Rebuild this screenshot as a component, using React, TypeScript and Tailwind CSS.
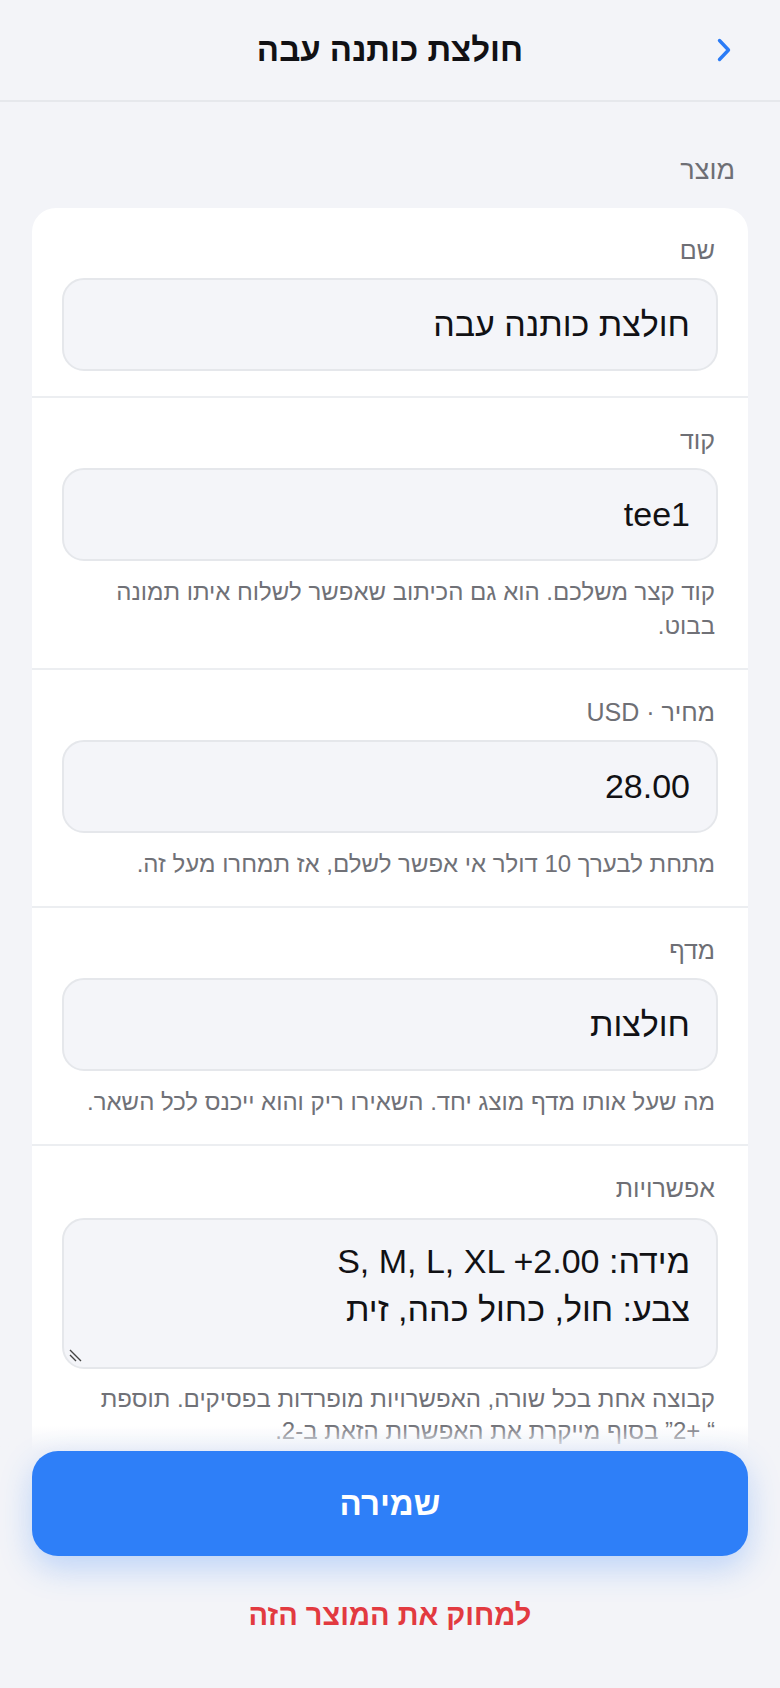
import React from 'react';

type Field = {
    label: string;
    value: string;
    help?: React.ReactNode;
};

const fields: Field[] = [
    { label: 'שם', value: 'חולצת כותנה עבה' },
    {
        label: 'קוד',
        value: 'tee1',
        help: (
            <>
                קוד קצר משלכם. הוא גם הכיתוב שאפשר לשלוח איתו תמונה
                <br />
                בבוט.
            </>
        ),
    },
    { label: 'מחיר · USD', value: '28.00', help: 'מתחת לבערך 10 דולר אי אפשר לשלם, אז תמחרו מעל זה.' },
    { label: 'מדף', value: 'חולצות', help: 'מה שעל אותו מדף מוצג יחד. השאירו ריק והוא ייכנס לכל השאר.' },
];

const FONT = '"Liberation Sans", Arial, "DejaVu Sans", sans-serif';

const Chevron = () => (
    <svg width="16" height="24" viewBox="0 0 16 24" fill="none">
        <path d="M3.5 2.5 L12.5 12 L3.5 21.5" stroke="#2b7cf6" strokeWidth="3.4" strokeLinecap="round" strokeLinejoin="round" />
    </svg>
);

const FieldRow: React.FC<{ field: Field }> = ({ field }) => (
    <div className="px-[30px] pt-[28px] pb-[25px] border-b-2 border-[#eceef1]">
        <div className="pr-[3px] text-[25px] leading-[28px] text-[#6e6f75]">{field.label}</div>
        <div className="mt-[14px] h-[93px] rounded-[22px] border-2 border-[#e5e7eb] bg-[#f4f5f9] px-[26px] flex items-center">
            <span className="text-[34px] text-[#111114]">{field.value}</span>
        </div>
        {field.help && (
            <p className="mt-[14px] pr-[3px] whitespace-nowrap text-[24px] leading-[34px] text-[#707177]">{field.help}</p>
        )}
    </div>
);

export default function App() {
    return (
        <div dir="rtl" className="relative h-[1688px] overflow-hidden bg-[#f3f4f8]" style={{ fontFamily: FONT }}>
            {/* Header */}
            <header className="h-[102px] grid grid-cols-[90px_1fr_90px] items-center border-b-2 border-[#e6e8ec]">
                <div className="flex mr-[48px]">
                    <Chevron />
                </div>
                <h1 className="text-center text-[33px] font-bold text-[#111114]">חולצת כותנה עבה</h1>
                <div />
            </header>

            <div className="pt-[56px] pr-[45px] text-[27px] leading-[24px] text-[#6e6f75]">מוצר</div>

            {/* Card */}
            <div className="mx-8 mt-[26px] rounded-[24px] bg-white">
                {fields.map(f => (
                    <FieldRow key={f.label} field={f} />
                ))}

                {/* Options */}
                <div className="px-[30px] pt-[28px] pb-24">
                    <div className="pr-[3px] text-[25px] leading-[28px] text-[#6e6f75]">אפשרויות</div>
                    <div className="relative mt-[16px] h-[151px] rounded-[22px] border-2 border-[#e5e7eb] bg-[#f4f5f9] px-[26px] pt-[17px]">
                        <div className="text-[34px] leading-[48px] text-[#111114]">
                            <div>מידה: S, M, L, XL +2.00</div>
                            <div>צבע: חול, כחול כהה, זית</div>
                        </div>
                        <svg className="absolute left-[4px] bottom-[4px]" width="18" height="18" viewBox="0 0 18 18">
                            <path d="M2 5 L13 16 M2 10 L8 16" stroke="#444" strokeWidth="1.4" />
                        </svg>
                    </div>
                    <p className="mt-[14px] pr-[3px] text-[24px] leading-[32px] text-[#707177]">
                        קבוצה אחת בכל שורה, האפשרויות מופרדות בפסיקים. תוספת
                        <br />
                        “ +2” בסוף מייקרת את האפשרות הזאת ב-2.
                    </p>
                </div>
            </div>

            {/* Sticky footer */}
            <div className="absolute inset-x-0 bottom-0">
                <div className="h-[26px] bg-gradient-to-b from-[#f3f4f8]/0 to-[#f3f4f8]" />
                <div className="bg-[#f3f4f8] px-8 pb-[56px]">
                    <button className="w-full h-[105px] rounded-[26px] bg-[#2e7ff8] text-white text-[33px] font-bold shadow-[0_12px_32px_rgba(46,127,248,0.28)]">
                        שמירה
                    </button>
                    <div className="mt-[42px] text-center text-[29px] font-semibold leading-[34px] text-[#e23a40]">
                        למחוק את המוצר הזה
                    </div>
                </div>
            </div>
        </div>
    );
}
